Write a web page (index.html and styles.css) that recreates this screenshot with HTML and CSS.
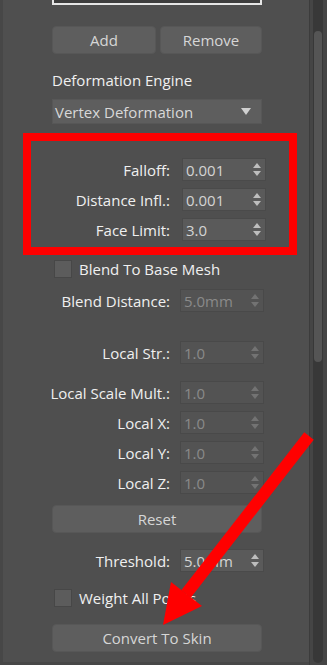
FILE: index.html
```html
<!DOCTYPE html>
<html>
<head>
<meta charset="utf-8">
<link rel="stylesheet" href="styles.css">
</head>
<body>
<div class="page">
  <div class="panel">
    <div class="content">
      <div class="listbox"></div>
      <div class="btn-row">
        <div class="btn add">Add</div>
        <div class="btn remove">Remove</div>
      </div>
      <div class="section-label">Deformation Engine</div>
      <div class="dropdown"><span>Vertex Deformation</span><span class="caret"></span></div>

      <div class="spin-row boxed r-falloff">
        <span class="lbl">Falloff:</span>
        <div class="field"><span>0.001</span><svg class="spin" viewBox="0 0 8 13"><polygon points="0,5 4,0 8,5"/><polygon points="0,8 8,8 4,13"/></svg></div>
      </div>
      <div class="spin-row boxed r-next">
        <span class="lbl">Distance Infl.:</span>
        <div class="field"><span>0.001</span><svg class="spin" viewBox="0 0 8 13"><polygon points="0,5 4,0 8,5"/><polygon points="0,8 8,8 4,13"/></svg></div>
      </div>
      <div class="spin-row boxed r-next">
        <span class="lbl">Face Limit:</span>
        <div class="field"><span>3.0</span><svg class="spin" viewBox="0 0 8 13"><polygon points="0,5 4,0 8,5"/><polygon points="0,8 8,8 4,13"/></svg></div>
      </div>

      <div class="check-row r-blend"><span class="box"></span><span>Blend To Base Mesh</span></div>

      <div class="spin-row r-blenddist">
        <span class="lbl">Blend Distance:</span>
        <div class="field disabled"><span>5.0mm</span><svg class="spin" viewBox="0 0 8 13"><polygon points="0,5 4,0 8,5"/><polygon points="0,8 8,8 4,13"/></svg></div>
      </div>

      <div class="spin-row r-localstr">
        <span class="lbl">Local Str.:</span>
        <div class="field disabled"><span>1.0</span><svg class="spin" viewBox="0 0 8 13"><polygon points="0,5 4,0 8,5"/><polygon points="0,8 8,8 4,13"/></svg></div>
      </div>
      <div class="spin-row r-scale">
        <span class="lbl">Local Scale Mult.:</span>
        <div class="field disabled"><span>1.0</span><svg class="spin" viewBox="0 0 8 13"><polygon points="0,5 4,0 8,5"/><polygon points="0,8 8,8 4,13"/></svg></div>
      </div>
      <div class="spin-row r-next">
        <span class="lbl">Local X:</span>
        <div class="field disabled"><span>1.0</span><svg class="spin" viewBox="0 0 8 13"><polygon points="0,5 4,0 8,5"/><polygon points="0,8 8,8 4,13"/></svg></div>
      </div>
      <div class="spin-row r-next">
        <span class="lbl">Local Y:</span>
        <div class="field disabled"><span>1.0</span><svg class="spin" viewBox="0 0 8 13"><polygon points="0,5 4,0 8,5"/><polygon points="0,8 8,8 4,13"/></svg></div>
      </div>
      <div class="spin-row r-next">
        <span class="lbl">Local Z:</span>
        <div class="field disabled"><span>1.0</span><svg class="spin" viewBox="0 0 8 13"><polygon points="0,5 4,0 8,5"/><polygon points="0,8 8,8 4,13"/></svg></div>
      </div>

      <div class="btn wide r-reset">Reset</div>

      <div class="spin-row r-threshold">
        <span class="lbl">Threshold:</span>
        <div class="field"><span>5.0mm</span><svg class="spin" viewBox="0 0 8 13"><polygon points="0,5 4,0 8,5"/><polygon points="0,8 8,8 4,13"/></svg></div>
      </div>

      <div class="check-row r-weight"><span class="box"></span><span>Weight All Points</span></div>

      <div class="btn wide r-convert">Convert To Skin</div>
    </div>
  </div>
  <div class="scrollbar">
    <div class="track"><div class="thumb"></div></div>
  </div>

  <div class="redbox"></div>
  <svg class="arrow" viewBox="0 0 327 665" width="327" height="665">
    <line x1="309" y1="436" x2="186" y2="594" stroke="#ff0000" stroke-width="12"/>
    <polygon points="171,582 202,606 163,625" fill="#ff0000"/>
  </svg>
</div>
</body>
</html>
```
FILE: styles.css
```css
* { box-sizing: border-box; }
html, body { margin: 0; padding: 0; background: #4f4f4f; }
body {
  font-family: "Open Sans", "Noto Sans", sans-serif;
  font-size: 15px;
  color: #f0f0f0;
}
.page {
  position: relative;
  width: 327px;
  height: 665px;
  display: flex;
  overflow: hidden;
}
.panel {
  width: 309px;
  height: 665px;
  background: #4f4f4f;
  border-left: 3px solid #474747;
  border-bottom: 3px solid #474747;
  padding-left: 49px;
}
.content {
  width: 210px;
  display: flex;
  flex-direction: column;
}
.listbox {
  height: 5px;
  background: #3e3e3e;
  border: 2px solid #e6e6e6;
  border-top: none;
}
.btn-row {
  margin-top: 21px;
  display: flex;
  gap: 4px;
}
.btn {
  height: 28px;
  background: #5e5e5e;
  border: 1px solid #575757;
  border-radius: 4px;
  color: #d6d6d6;
  display: flex;
  align-items: center;
  justify-content: center;
  line-height: 20px;
}
.btn.add { width: 104px; }
.btn.remove { width: 102px; }
.btn.wide { width: 210px; }
.section-label {
  margin-top: 16px;
  line-height: 20px;
  height: 20px;
  white-space: nowrap;
}
.dropdown {
  margin-top: 9px;
  height: 25px;
  background: #5e5e5e;
  border: 1px solid #575757;
  display: flex;
  align-items: center;
  justify-content: space-between;
  padding: 0 10px 0 2px;
  color: #d8d8d8;
  line-height: 20px;
}
.caret {
  width: 0;
  height: 0;
  border-left: 5px solid transparent;
  border-right: 5px solid transparent;
  border-top: 7px solid #d0d0d0;
}
.spin-row {
  margin-left: -49px;
  display: grid;
  grid-template-columns: 167px 84px;
  column-gap: 10px;
  align-items: center;
  height: 23px;
}
.spin-row.boxed { column-gap: 12px; }
.lbl {
  text-align: right;
  white-space: nowrap;
  line-height: 20px;
}
.field {
  height: 23px;
  background: #5a5a5a;
  border: 1px solid #4a4a4a;
  display: flex;
  align-items: center;
  justify-content: space-between;
  padding: 0 4px 0 3px;
  color: #d4d4d4;
  line-height: 20px;
}
.field .spin { width: 8px; height: 13px; fill: #bdbdbd; }
.field.disabled { background: #535353; border-color: #494949; color: #8a8a8a; }
.field.disabled .spin { fill: #737373; }

.check-row {
  display: flex;
  align-items: center;
  gap: 7px;
  height: 18px;
  margin-left: 2px;
  white-space: nowrap;
  line-height: 20px;
}
.box {
  width: 18px;
  height: 18px;
  background: #5c5c5c;
  border: 1px solid #474747;
}

.r-falloff { margin-top: 34px; }
.r-next { margin-top: 7px; }
.r-blend { margin-top: 19px; }
.r-blenddist { margin-top: 11px; }
.r-localstr { margin-top: 29px; }
.r-scale { margin-top: 17px; }
.r-reset { margin-top: 11px; }
.r-threshold { margin-top: 16px; }
.r-weight { margin-top: 17px; }
.r-convert { margin-top: 17px; }

.scrollbar {
  width: 18px;
  height: 665px;
  background: #454545;
  border-left: 1px solid #3c3c3c;
  padding: 0 4px 2px 3px;
}
.track {
  height: 100%;
  background: #383838;
  border-radius: 0 0 5px 5px;
  padding: 31px 1px 0 1px;
}
.thumb {
  height: 331px;
  background: #555555;
  border-radius: 4px;
}
.redbox {
  position: absolute;
  left: 23px;
  top: 133px;
  width: 274px;
  height: 122px;
  border: 8px solid #ff0000;
}
.arrow {
  position: absolute;
  left: 0;
  top: 0;
  pointer-events: none;
}
```
